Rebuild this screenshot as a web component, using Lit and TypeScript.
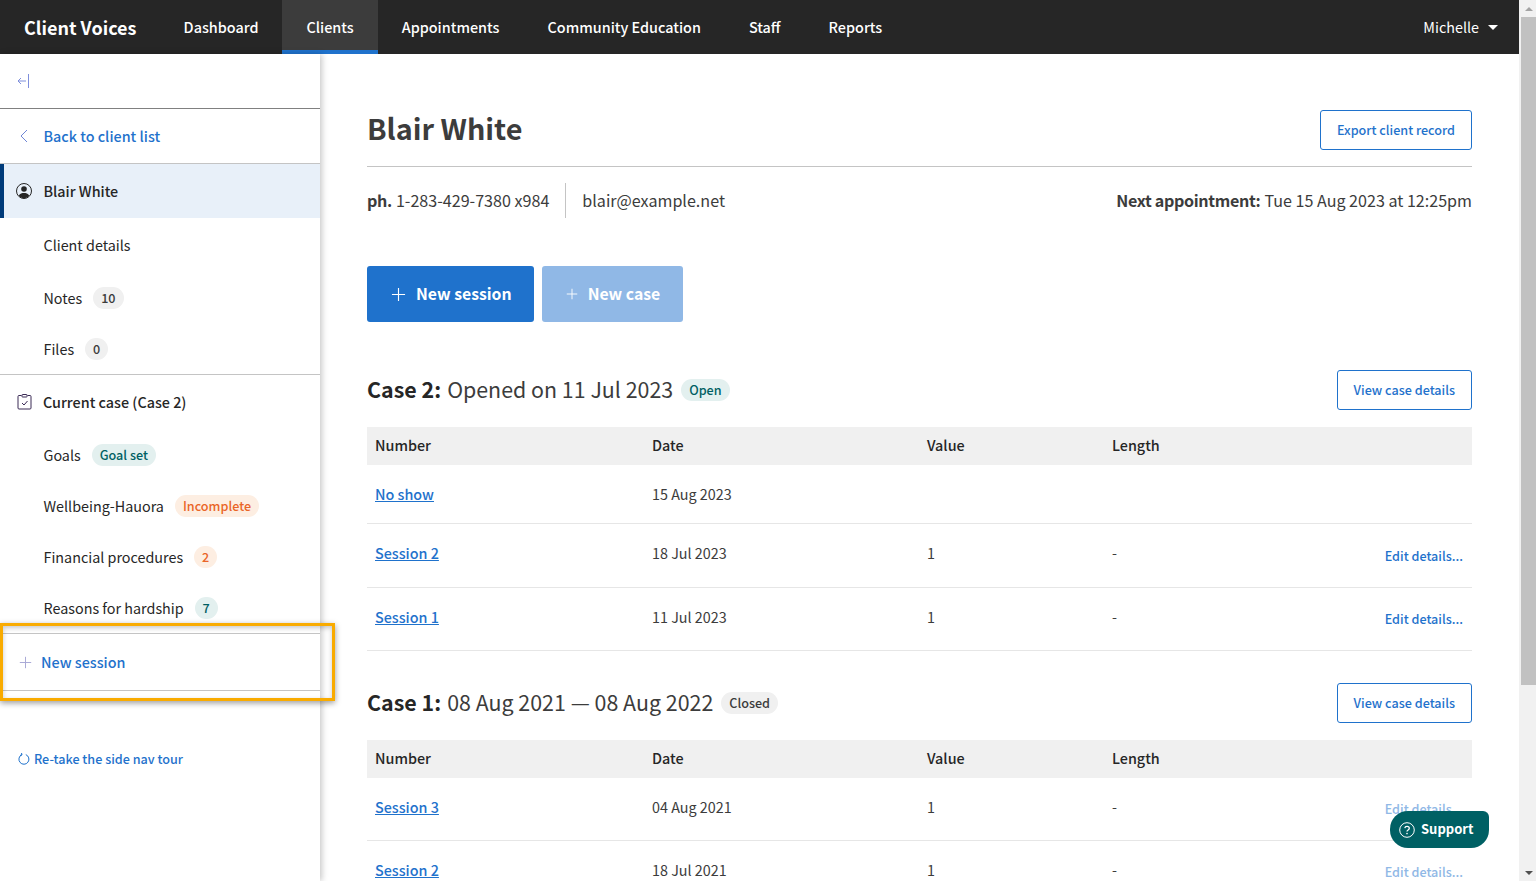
import { LitElement, css, html } from "lit";
import { customElement } from "lit/decorators.js";

const plus = (size: number) => html`<svg width=${size} height=${size} viewBox="0 0 16 16" fill="none" stroke="currentColor" stroke-width="1.2"><path d="M8 1v14M1 8h14" /></svg>`;

type Row = { name: string; date: string; value?: string; length?: string; edit?: boolean };

const case2: Row[] = [
  { name: "No show", date: "15 Aug 2023" },
  { name: "Session 2", date: "18 Jul 2023", value: "1", length: "-", edit: true },
  { name: "Session 1", date: "11 Jul 2023", value: "1", length: "-", edit: true },
];

const case1: Row[] = [
  { name: "Session 3", date: "04 Aug 2021", value: "1", length: "-", edit: true },
  { name: "Session 2", date: "18 Jul 2021", value: "1", length: "-", edit: true },
];

@customElement("app-root")
export class AppRoot extends LitElement {
  static styles = css`
    :host {
      display: flex;
      height: 881px;
      overflow: hidden;
      position: relative;
      font-family: "Noto Sans CJK JP", "Noto Sans", sans-serif;
      font-size: 14.35px;
      line-height: 24px;
      color: #262626;
      background: #fff;
    }
    a { color: #1f72cc; text-decoration: none; }

    .page { flex: 1; min-width: 0; display: flex; flex-direction: column; }

    .topbar { height: 54px; flex: none; background: #262626; color: #fff; display: flex; align-items: stretch; padding-left: 24px; }
    .brand { font-size: 18px; font-weight: 700; align-self: center; width: 135.6px; }
    .tab { display: flex; align-items: center; padding: 4px 24px 0; color: #fff; font-size: 14.38px; font-weight: 500; border-bottom: 4px solid transparent; box-sizing: border-box; }
    .tab.active { background: #3c3c3c; border-bottom-color: #1f72cc; }
    .user { margin-left: auto; display: flex; align-items: center; gap: 9px; padding-right: 21px; }
    .caret { width: 0; height: 0; border-left: 5px solid transparent; border-right: 5px solid transparent; border-top: 5px solid #fff; }

    .body { flex: 1; display: flex; min-height: 0; }

    .side { width: 320px; flex: none; background: #fff; box-shadow: 2px 0 6px rgba(0, 0, 0, 0.22); display: flex; flex-direction: column; z-index: 1; }
    .row { display: flex; align-items: center; padding-left: 43.5px; flex: none; }
    .collapse { height: 54px; padding-left: 17px; border-bottom: 1px solid #808080; }
    .back { height: 54px; padding-left: 19px; gap: 15.5px; border-bottom: 1px solid #c4c4c4; }
    .back a { font-weight: 500; }
    .person { height: 54px; padding-left: 12px; gap: 11.5px; background: #e8f0f9; border-left: 4px solid #003b7a; }
    .person span { font-weight: 500; }
    .sub { height: 51px; gap: 11px; }
    .sub.first { height: 54px; }
    .case-row { height: 54px; padding-left: 17px; gap: 11px; font-weight: 500; border-top: 1px solid #c4c4c4; }
    .badge { display: inline-flex; align-items: center; justify-content: center; height: 22px; min-width: 23px; box-sizing: border-box; padding: 0 8px; border-radius: 11px; font-size: 12.6px; font-weight: 500; line-height: 22px; }
    .badge.round { padding: 0 4px; }
    .gray { background: #f0f0f0; color: #3c3c3c; }
    .teal { background: #e3f0ef; color: #005f63; }
    .orange { background: #fdeee2; color: #ea6528; }
    .new { height: 58px; padding-left: 19px; gap: 9px; color: #1f72cc; font-weight: 500; border-top: 1px solid #c4c4c4; border-bottom: 1px solid #c4c4c4; box-sizing: border-box; }
    .new svg { color: #a9a9d6; }
    .retake { margin-top: 56px; padding-left: 18px; gap: 4px; font-size: 12.6px; font-weight: 500; color: #1f72cc; }

    main { flex: 1; min-width: 0; padding: 0 47px; }
    .title-row { height: 113px; display: flex; align-items: center; justify-content: space-between; border-bottom: 1px solid #c4c4c4; padding-top: 39px; box-sizing: border-box; }
    h1 { margin: 0 0 4px; font-size: 28.8px; line-height: 40px; font-weight: 700; color: #3c3c3c; }
    .outline { display: inline-flex; align-items: center; justify-content: center; height: 40px; box-sizing: border-box; border: 1px solid #1f72cc; border-radius: 3px; background: #fff; color: #1f72cc; font-size: 12.6px; font-weight: 500; padding: 0 16px; }
    .contact { display: flex; align-items: center; height: 35px; margin-top: 16px; font-size: 16.1px; color: #3c3c3c; }
    .contact b { font-weight: 700; letter-spacing: -0.33px; }
    .phone { padding: 0 16px 2px 0; box-sizing: border-box; border-right: 1px solid #c4c4c4; height: 35px; display: flex; align-items: center; gap: 4px; }
    .mail { padding-left: 16px; margin-bottom: 2px; }
    .next { margin-left: auto; margin-bottom: 2px; display: flex; gap: 4px; }
    .actions { display: flex; gap: 8px; margin-top: 48px; }
    .primary { height: 56px; display: inline-flex; align-items: center; gap: 10px; padding: 0 22px 0 24px; border-radius: 3px; background: #1f72cc; color: #fff; font-size: 15.8px; font-weight: 700; }
    .primary.off { background: #90b8e6; padding-right: 23px; }
    .case-head { display: flex; align-items: center; justify-content: space-between; height: 40px; }
    .case-head.two { margin-top: 48px; }
    .case-head.one { margin-top: 32px; }
    .case-title { display: flex; align-items: center; gap: 8px; font-size: 21.4px; line-height: 32px; color: #3c3c3c; padding-bottom: 3px; }
    .case-title b { font-weight: 700; color: #262626; margin-right: -2px; }
    .case-title .badge { margin-top: 3px; }

    table { width: 100%; border-collapse: collapse; table-layout: fixed; margin-top: 17px; }
    th { height: 36px; background: #f0f0f0; text-align: left; font-weight: 500; padding: 0 8px 2px; }
    td { padding: 0 8px 5px; height: 58px; border-bottom: 1px solid #e6e6e6; color: #3c3c3c; }
    tr.short td { height: 58px; padding-bottom: 0; }
    tbody tr:last-child td, .fade td { height: 57px; }
    td a.link { text-decoration: underline; font-weight: 500; }
    td.act { text-align: right; font-size: 12.6px; font-weight: 500; padding: 0 9px 0 8px; }
    .fade td.act a { color: #90b8e6; }

    .scroll { width: 17px; flex: none; background: #f1f1f1; display: flex; flex-direction: column; padding-left: 2px; box-sizing: border-box; }
    .arrow { height: 17px; flex: none; display: flex; align-items: center; justify-content: center; }
    .up { width: 0; height: 0; border-left: 4px solid transparent; border-right: 4px solid transparent; border-bottom: 4px solid #a3a3a3; }
    .down { width: 0; height: 0; border-left: 4px solid transparent; border-right: 4px solid transparent; border-top: 4px solid #505050; }
    .thumb { height: 668px; background: #c1c1c1; flex: none; }
    .gap { flex: 1; }

    .support { position: absolute; left: 1390px; top: 811px; width: 99px; height: 37px; box-sizing: border-box; padding-left: 9px; display: flex; align-items: center; gap: 6px; background: #006064; color: #fff; font-size: 13px; font-weight: 700; border-radius: 18px 6px 18px 18px; z-index: 3; }
    .support span { color: #fff; margin-bottom: 2px; }
    .tour { position: absolute; left: 0; top: 623px; width: 335px; height: 78px; box-sizing: border-box; border: 3px solid #f9ab00; box-shadow: 0 2px 6px rgba(0, 0, 0, 0.4), inset 0 2px 5px rgba(0, 0, 0, 0.22); z-index: 2; pointer-events: none; }
  `;

  private table(rows: Row[], fade = false) {
    return html`<table class=${fade ? "fade" : ""}>
      <colgroup>
        <col style="width:277px" /><col style="width:275px" /><col style="width:185px" /><col style="width:184px" /><col />
      </colgroup>
      <thead><tr><th>Number</th><th>Date</th><th>Value</th><th>Length</th><th></th></tr></thead>
      <tbody>
        ${rows.map(
          (r) => html`<tr class=${r.edit ? "" : "short"}>
            <td><a class="link" href="#">${r.name}</a></td>
            <td>${r.date}</td>
            <td>${r.value ?? ""}</td>
            <td>${r.length ?? ""}</td>
            <td class=${r.edit ? "act" : ""}>${r.edit ? html`<a href="#">Edit details...</a>` : ""}</td>
          </tr>`,
        )}
      </tbody>
    </table>`;
  }

  private sidebar() {
    return html`<aside class="side">
      <div class="row collapse">
        <svg width="13" height="14" viewBox="0 0 13 14" fill="none" stroke="#7f8fdc" stroke-width="1"><path d="M11.5 0v14M9 7H1M4 4 1 7l3 3" /></svg>
      </div>
      <div class="row back">
        <svg width="9" height="14" viewBox="0 0 9 14" fill="none" stroke="#6f86d6" stroke-width="1"><path d="M8 1 2 7l6 6" /></svg>
        <a href="#">Back to client list</a>
      </div>
      <div class="row person">
        <svg width="16" height="16" viewBox="0 0 16 16" fill="none"><circle cx="8" cy="8" r="7.5" stroke="#262626" /><circle cx="8" cy="6" r="2.8" fill="#262626" /><path d="M2.8 12.6C4 10.6 6 10 8 10s4 .6 5.2 2.6C12 14.4 10 15.4 8 15.4s-4-1-5.2-2.8Z" fill="#262626" /></svg>
        <span>Blair White</span>
      </div>
      <div class="row sub first">Client details</div>
      <div class="row sub">Notes <span class="badge gray">10</span></div>
      <div class="row sub">Files <span class="badge gray round">0</span></div>
      <div class="row case-row">
        <svg width="15" height="16" viewBox="0 0 15 16" fill="none" stroke="#3a2a55" stroke-width="1"><path d="M4.5 1.500H2a1 1 0 0 0-1 1V14a1 1 0 0 0 1 1h11a1 1 0 0 0 1-1V2.500a1 1 0 0 0-1-1h-2.500" /><rect x="5" y="0.500" width="5" height="2.500" rx="0.500" /><path d="m5 9 2 2 3.500-4" /></svg>
        Current case (Case 2)
      </div>
      <div class="row sub">Goals <span class="badge teal">Goal set</span></div>
      <div class="row sub">Wellbeing-Hauora <span class="badge orange">Incomplete</span></div>
      <div class="row sub">Financial procedures <span class="badge orange round">2</span></div>
      <div class="row sub">Reasons for hardship <span class="badge teal round">7</span></div>
      <div class="row new">${plus(13)} New session</div>
      <div class="row retake">
        <svg width="12" height="12" viewBox="0 0 12 12" fill="none" stroke="#1f72cc" stroke-width="1"><path d="M7.8 1.600a5 5 0 1 1-4 .1" /><path d="M3.5 0 4 2 2 2.400" /></svg>
        Re-take the side nav tour
      </div>
    </aside>`;
  }

  protected override render() {
    return html`
      <div class="page">
        <header class="topbar">
          <div class="brand">Client Voices</div>
          <a class="tab" href="#">Dashboard</a>
          <a class="tab active" href="#">Clients</a>
          <a class="tab" href="#">Appointments</a>
          <a class="tab" href="#">Community Education</a>
          <a class="tab" href="#">Staff</a>
          <a class="tab" href="#">Reports</a>
          <div class="user">Michelle <span class="caret"></span></div>
        </header>
        <div class="body">
          ${this.sidebar()}
          <main>
            <div class="title-row">
              <h1>Blair White</h1>
              <a class="outline" href="#">Export client record</a>
            </div>
            <div class="contact">
              <div class="phone"><b>ph.</b> 1-283-429-7380 x984</div>
              <div class="mail">blair@example.net</div>
              <div class="next"><b>Next appointment:</b> Tue 15 Aug 2023 at 12:25pm</div>
            </div>
            <div class="actions">
              <a class="primary" href="#">${plus(15)} New session</a>
              <a class="primary off" href="#">${plus(12)} New case</a>
            </div>
            <div class="case-head two">
              <div class="case-title"><b>Case 2:</b> Opened on 11 Jul 2023 <span class="badge teal">Open</span></div>
              <a class="outline" href="#">View case details</a>
            </div>
            ${this.table(case2)}
            <div class="case-head one">
              <div class="case-title"><b>Case 1:</b> 08 Aug 2021 — 08 Aug 2022 <span class="badge gray">Closed</span></div>
              <a class="outline" href="#">View case details</a>
            </div>
            ${this.table(case1, true)}
          </main>
        </div>
      </div>
      <div class="scroll">
        <div class="arrow"><span class="up"></span></div>
        <div class="thumb"></div>
        <div class="gap"></div>
        <div class="arrow"><span class="down"></span></div>
      </div>
      <div class="tour"></div>
      <a class="support" href="#">
        <svg width="16" height="16" viewBox="0 0 16 16" fill="none" stroke="#fff" stroke-width="1"><circle cx="8" cy="8" r="7.3" /><path d="M5.8 6.200C6 5 7 4.400 8 4.400c1.300 0 2.300.8 2.300 1.900 0 1.700-2.300 1.600-2.300 3.200" stroke-width="1.300" /><circle cx="8" cy="11.600" r="0.800" fill="#fff" stroke="none" /></svg>
        <span>Support</span>
      </a>
    `;
  }
}
